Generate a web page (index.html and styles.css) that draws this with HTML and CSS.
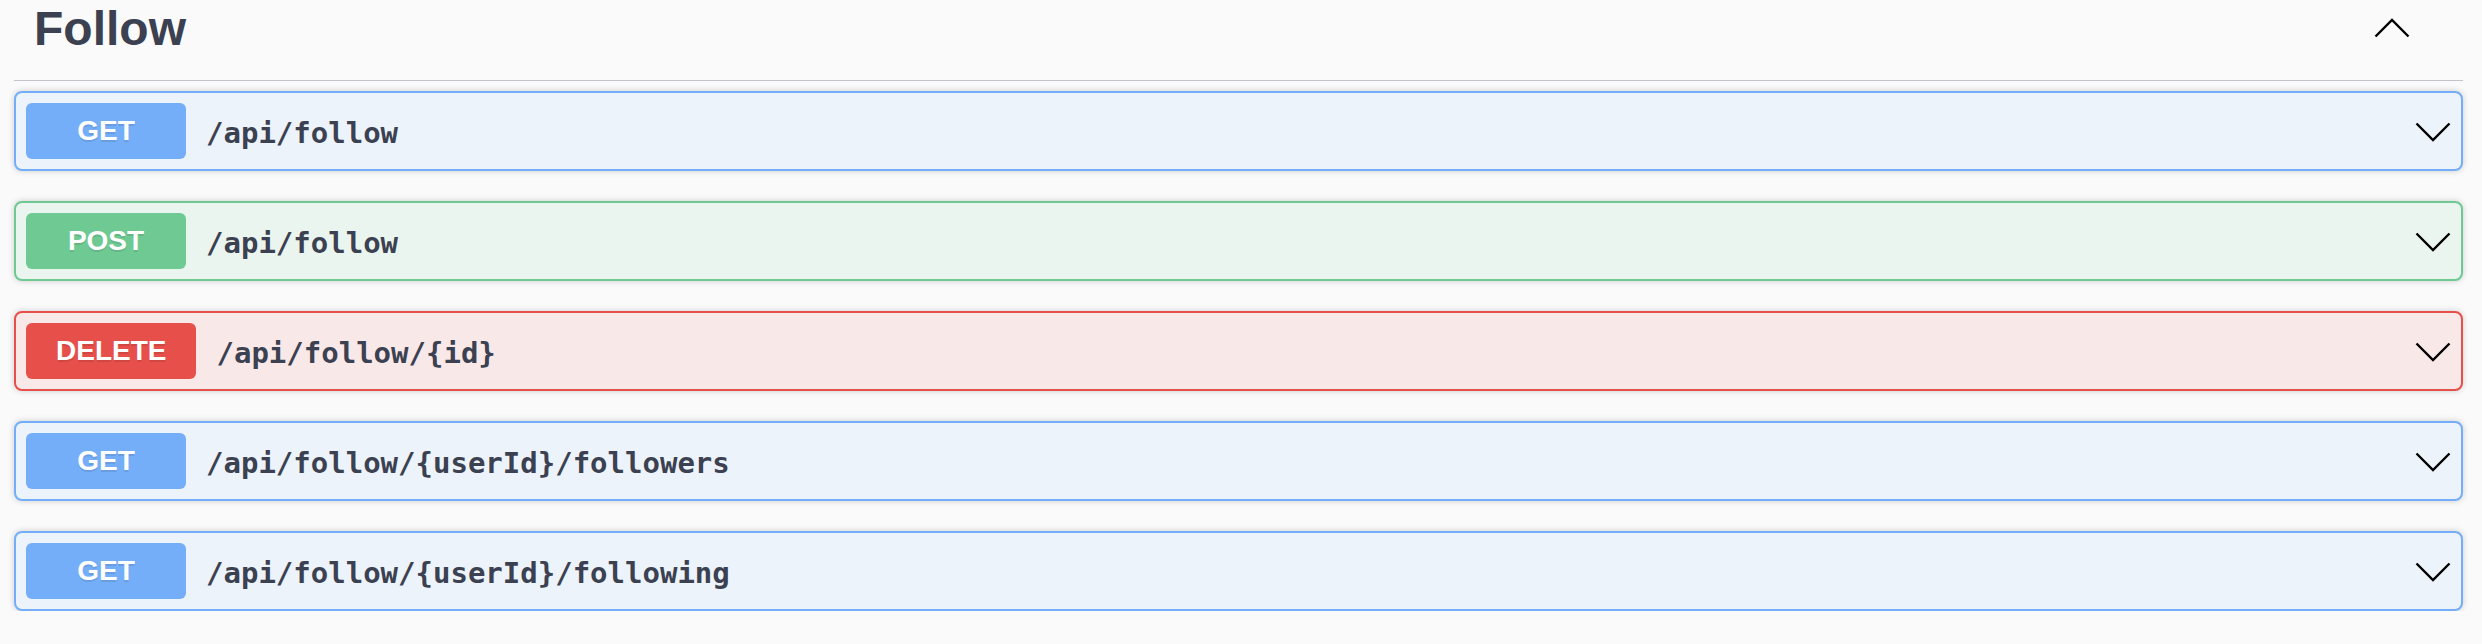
FILE: index.html
```html
<!DOCTYPE html>
<html>
<head>
<meta charset="utf-8">
<link rel="stylesheet" href="styles.css">
</head>
<body>
<div class="section">
  <div class="tag">
    <h3 class="tag-title">Follow</h3>
    <svg class="arrow-up" width="36" height="20" viewBox="0 0 36 20"><polyline points="1.5,18.5 18,2 34.5,18.5" fill="none" stroke="#000" stroke-width="2.4"/></svg>
  </div>
  <div class="ops">
    <div class="op op-get">
      <span class="method">GET</span>
      <span class="path">/api/follow</span>
      <svg class="arrow" width="36" height="20" viewBox="0 0 36 20"><polyline points="1.5,1.5 18,18 34.5,1.5" fill="none" stroke="#000" stroke-width="2.4"/></svg>
    </div>
    <div class="op op-post">
      <span class="method">POST</span>
      <span class="path">/api/follow</span>
      <svg class="arrow" width="36" height="20" viewBox="0 0 36 20"><polyline points="1.5,1.5 18,18 34.5,1.5" fill="none" stroke="#000" stroke-width="2.4"/></svg>
    </div>
    <div class="op op-delete">
      <span class="method">DELETE</span>
      <span class="path">/api/follow/{id}</span>
      <svg class="arrow" width="36" height="20" viewBox="0 0 36 20"><polyline points="1.5,1.5 18,18 34.5,1.5" fill="none" stroke="#000" stroke-width="2.4"/></svg>
    </div>
    <div class="op op-get">
      <span class="method">GET</span>
      <span class="path">/api/follow/{userId}/followers</span>
      <svg class="arrow" width="36" height="20" viewBox="0 0 36 20"><polyline points="1.5,1.5 18,18 34.5,1.5" fill="none" stroke="#000" stroke-width="2.4"/></svg>
    </div>
    <div class="op op-get">
      <span class="method">GET</span>
      <span class="path">/api/follow/{userId}/following</span>
      <svg class="arrow" width="36" height="20" viewBox="0 0 36 20"><polyline points="1.5,1.5 18,18 34.5,1.5" fill="none" stroke="#000" stroke-width="2.4"/></svg>
    </div>
  </div>
</div>
</body>
</html>
```

FILE: styles.css
```css
html, body {
  margin: 0;
  padding: 0;
  background: #fafafa;
}

body {
  font-family: "Liberation Sans", Arial, sans-serif;
  color: #3b4151;
}

.section {
  padding: 0 19px 0 14px;
}

.tag {
  display: flex;
  align-items: flex-start;
  justify-content: space-between;
  box-sizing: border-box;
  height: 81px;
  padding: 1px 53px 0 20px;
  border-bottom: 1px solid #c3c4c9;
  margin-bottom: 10px;
}

.tag-title {
  margin: 0;
  font-size: 48px;
  line-height: 56px;
  font-weight: 700;
  color: #3b4151;
}

.arrow-up {
  margin-top: 17px;
}

.ops {
  display: flex;
  flex-direction: column;
  gap: 30px;
}

.op {
  display: flex;
  align-items: center;
  box-sizing: border-box;
  height: 80px;
  padding: 0 10px;
  border: 2px solid;
  border-radius: 8px;
  box-shadow: 0 0 6px rgba(0, 0, 0, 0.19);
}

.method {
  box-sizing: border-box;
  min-width: 160px;
  height: 56px;
  padding: 0 30px;
  border-radius: 6px;
  display: flex;
  align-items: center;
  justify-content: center;
  font-family: "Liberation Sans", Arial, sans-serif;
  font-size: 28px;
  font-weight: 700;
  color: #fff;
  text-shadow: 0 2px 0 rgba(0, 0, 0, 0.1);
}

.path {
  flex: 1;
  padding: 0 20px;
  font-family: "DejaVu Sans Mono", monospace;
  font-size: 29px;
  font-weight: 700;
  color: #3b4151;
  position: relative;
  top: 2px;
}

.arrow {
  margin-right: 0;
  margin-top: 2px;
}

.op-get {
  background: #ecf3fb;
  border-color: #74aef8;
}
.op-get .method {
  background: #74aef8;
}

.op-post {
  background: #ebf5ef;
  border-color: #6fc992;
}
.op-post .method {
  background: #6fc992;
}

.op-delete {
  background: #f9e8e8;
  border-color: #e74f4a;
}
.op-delete .method {
  background: #e74f4a;
}
```
